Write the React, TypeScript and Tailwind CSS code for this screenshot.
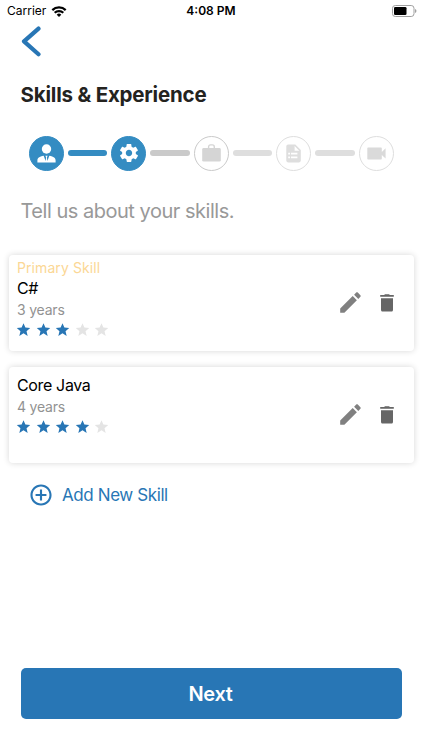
import React from 'react';
import { IoMdStar, IoMdSettings, IoMdAddCircleOutline } from 'react-icons/io';

interface Skill {
    name: string;
    years: number;
    rating: number;
    primary?: boolean;
}

const SKILLS: Skill[] = [
    { name: 'C#', years: 3, rating: 3, primary: true },
    { name: 'Core Java', years: 4, rating: 4 },
];

// --- Status bar icons ---
const WifiIcon = () => (
    <svg className="w-[16px] h-[11px]" viewBox="0 0 15 11" fill="none" stroke="#000" strokeWidth="2.2">
        <path d="M.8 4.1a9.6 9.6 0 0 1 13.4 0" />
        <path d="M3.2 6.8a6.1 6.1 0 0 1 8.6 0" />
        <path d="M7.5 11 5.2 8.7a3.2 3.2 0 0 1 4.6 0Z" fill="#000" stroke="none" />
    </svg>
);

const BatteryIcon = () => (
    <svg className="w-[25px] h-[12px]" viewBox="0 0 25 12">
        <rect x=".5" y=".5" width="21.5" height="11" rx="2.8" fill="none" stroke="#a0a0a0" />
        <rect x="2" y="2" width="12.5" height="8" rx="1.3" fill="#000" />
        <path d="M23.2 4v4c1.6-.7 1.6-3.3 0-4Z" fill="#8c8c8c" />
    </svg>
);

// --- Step icons ---
const PersonIcon = () => (
    <svg className="w-[19px] h-[19px]" viewBox="0 0 19 19" fill="currentColor">
        <circle cx="9.5" cy="5" r="4.7" />
        <path d="M.4 18.5v-2.2c0-2.4 1.9-3.7 6.3-4.6l1.9 5.3.5-3.6-.7-1.6h2.2l-.7 1.6.5 3.6 1.9-5.3c4.4.9 6.3 2.2 6.3 4.6v2.2Z" />
    </svg>
);

const BriefcaseIcon = () => (
    <svg className="w-[19px] h-[18px]" viewBox="0 0 19 18" fill="currentColor">
        <path d="M6.6 4.6V3C6.6 1.5 7.3.9 8.5.9h1.9c1.2 0 1.9.6 1.9 2.1v1.6" fill="none" stroke="currentColor" strokeWidth="1.4" />
        <rect x=".2" y="4" width="18.6" height="13.6" rx="1.4" />
    </svg>
);

const DocumentIcon = () => (
    <svg className="w-[15px] h-[19px]" viewBox="0 0 15 19" fill="currentColor">
        <path
            fillRule="evenodd"
            d="M2.2.4h7.1L14.8 6v10.6c0 1.1-.8 1.9-1.9 1.9H2.2c-1.1 0-1.9-.8-1.9-1.9V2.3C.3 1.2 1.1.4 2.2.4Zm6.4 1.5v4.8h4.7ZM2.2 8.8v1.8H4V8.8Zm2.8 0v1.8h6.4V8.8Zm0 3.6v1.8h6.4v-1.8Zm-2.8 0v1.8H4v-1.8Z"
        />
    </svg>
);

const VideoIcon = () => (
    <svg className="w-[19px] h-[13px]" viewBox="0 0 19 13" fill="currentColor">
        <path d="M1.3.4h12.5c.6 0 1 .4 1 1v3.5l3.8-3.7v10.4l-3.8-3.7v3.6c0 .6-.4 1-1 1H1.3c-.6 0-1-.4-1-1V1.4c0-.6.4-1 1-1Z" />
    </svg>
);

// --- Card action icons ---
const PencilIcon = () => (
    <svg className="w-[21px] h-[21px]" viewBox="0 0 21 21" fill="#808080">
        <path d="M.2 20.7v-4.2L12.7 4l4.2 4.2L4.4 20.7Z" />
        <path d="m14.1 2.7 2.1-2.1c.5-.5 1.1-.5 1.6 0l2.6 2.6c.5.5.5 1.1 0 1.6l-2.1 2.1Z" />
    </svg>
);

const TrashIcon = () => (
    <svg className="w-[14px] h-[18px]" viewBox="0 0 14 18" fill="#666">
        <path d="M.2 1.1h3.9L5 .2h4l.9.9h3.9v1.7H.2Z" />
        <path d="M1 4.3h12v11.4c0 1.2-.7 1.9-1.9 1.9H2.9c-1.2 0-1.9-.7-1.9-1.9Z" />
    </svg>
);

const STEPS = [
    { icon: <PersonIcon />, circle: 'bg-[#348cc2] border-[#348cc2] text-white', line: 'bg-[#348cc2]' },
    { icon: <IoMdSettings size={22} />, circle: 'bg-[#348cc2] border-[#348cc2] text-white', line: 'bg-[#cacaca]' },
    { icon: <BriefcaseIcon />, circle: 'border-[#cacaca] text-[#d5d5d5]', line: 'bg-[#dedede]' },
    { icon: <DocumentIcon />, circle: 'border-[#dedede] text-[#dedede]', line: 'bg-[#dedede]' },
    { icon: <VideoIcon />, circle: 'border-[#dedede] text-[#dadada]', line: '' },
];

const SkillCard: React.FC<{ skill: Skill }> = ({ skill }) => (
    <div className="flex h-24 items-center justify-between rounded-[4px] bg-white pl-[8.5px] pr-[20px] shadow-[0_0_6px_rgba(0,0,0,0.16)]">
        <div className="flex h-full flex-col pt-[3px]">
            {skill.primary && (
                <span className="h-[19px] text-[14px] leading-5 tracking-[0.08px] text-[#fbd795]">Primary Skill</span>
            )}
            <span className={`text-[16px] leading-[22px] tracking-[-0.35px] text-black ${skill.primary ? '' : 'mt-[4px]'}`}>{skill.name}</span>
            <span className="text-[14px] leading-[21px] tracking-[-0.2px] text-[#929292]">{skill.years} years</span>
            <div className="-ml-[2px] mt-[1.5px] flex gap-[2.5px]">
                {[1, 2, 3, 4, 5].map(n => (
                    <IoMdStar key={n} size={17} className={n <= skill.rating ? 'text-[#2876b5]' : 'text-[#e4e4e4]'} />
                ))}
            </div>
        </div>
        <div className="flex items-center gap-[19px]">
            <button><PencilIcon /></button>
            <button><TrashIcon /></button>
        </div>
    </div>
);

const App: React.FC = () => {
    return (
        <div className="flex h-[750px] w-[422px] flex-col overflow-hidden bg-white font-[Inter,sans-serif]">
            {/* Status bar */}
            <div className="grid h-[22px] shrink-0 grid-cols-3 items-center px-[5px] text-[12px] text-black">
                <div className="flex items-center gap-[5px] pl-[2px]">
                    <span>Carrier</span>
                    <WifiIcon />
                </div>
                <span className="text-center font-semibold">4:08 PM</span>
                <div className="flex justify-end"><BatteryIcon /></div>
            </div>

            {/* Header */}
            <button className="ml-[20.5px] mt-[4px] w-5">
                <svg className="h-[31px] w-5" viewBox="0 0 20 31" fill="none" stroke="#2876b5" strokeWidth="4.2" strokeLinecap="round" strokeLinejoin="round">
                    <path d="M17.5 2.6 3 15.4l14.5 12.8" />
                </svg>
            </button>
            <h1 className="ml-[20.5px] mt-[24px] text-[20.5px] font-bold leading-7 tracking-[-0.2px] text-[#24231f]">Skills &amp; Experience</h1>

            {/* Steps */}
            <div className="ml-[28.5px] mt-[26.5px] flex items-center">
                {STEPS.map((step, i) => (
                    <React.Fragment key={i}>
                        <div className={`flex h-[35px] w-[35px] items-center justify-center rounded-full border ${step.circle}`}>
                            {step.icon}
                        </div>
                        {step.line && <div className={`mx-[4px] h-[6px] w-[39.5px] rounded-full ${step.line}`} />}
                    </React.Fragment>
                ))}
            </div>
            <p className="ml-[20.5px] mt-[26.5px] text-[20px] leading-7 tracking-[-0.48px] text-[#999]">Tell us about your skills.</p>

            {/* Skill list */}
            <div className="mx-[8.5px] mt-[29.5px] flex flex-col gap-4">
                {SKILLS.map(skill => (
                    <SkillCard key={skill.name} skill={skill} />
                ))}
            </div>
            <button className="ml-[28px] mt-[19.5px] flex items-center gap-[8px] text-[17px] leading-[26px] tracking-[-0.4px] text-[#2876b5]">
                <IoMdAddCircleOutline size={26} />
                <span>Add New Skill</span>
            </button>

            <button className="mx-[20.5px] mb-[31px] mt-auto h-[51px] rounded-[5px] bg-[#2876b5] pr-[1px] text-[20px] font-semibold tracking-[-0.3px] text-white">
                Next
            </button>
        </div>
    );
};

export default App;
